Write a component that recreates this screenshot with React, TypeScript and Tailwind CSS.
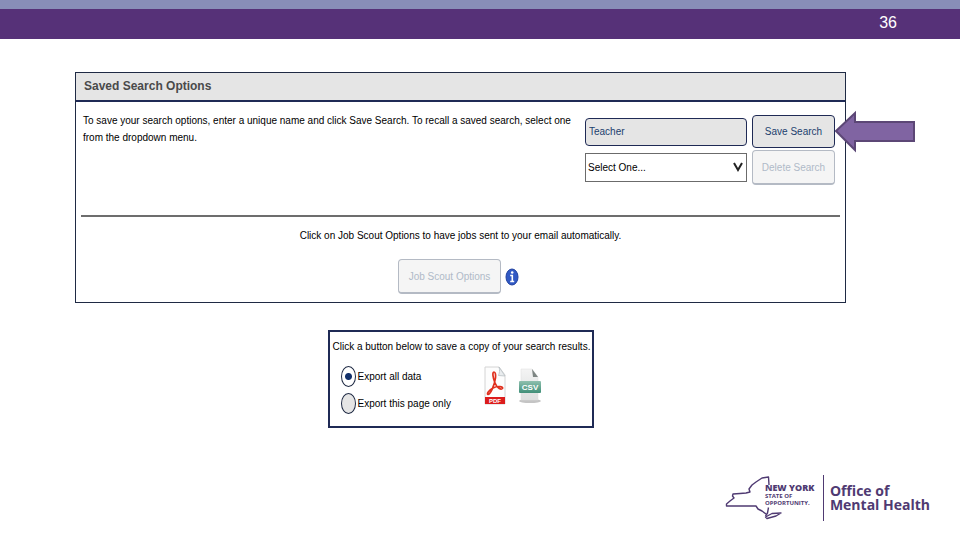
import React, { useState } from 'react';

const PdfIcon = () => (
  <svg viewBox="0 0 22 39" className="h-[39px] w-[22px]" aria-hidden="true">
    <path d="M1 1H15L21 9V38H1Z" fill="#fdfdfd" stroke="#d4d4d4" />
    <path d="M15 1C16 4 15.500 7 14.500 9.500L21 10Z" fill="#e9ecee" stroke="#b9c0c4" strokeWidth=".8" />
    <path
      d="M10 6C8 6 9 12 11 17C13 22 17 24 18.500 22.500C19.500 20.500 14 19.500 9 22C4.500 24.500 2.500 28 4 28.500C6.500 28.500 10.500 19 11.500 12C11.800 9 11.500 6 10 6Z"
      fill="none"
      stroke="#e0301e"
      strokeWidth="1.700"
    />
    <rect x="1" y="31" width="20" height="7" fill="#dc1c1c" />
    <text x="11" y="37" textAnchor="middle" fontSize="6" fontWeight="700" fill="#fff" fontFamily="Liberation Sans, sans-serif">
      PDF
    </text>
  </svg>
);

const CsvIcon = () => (
  <svg viewBox="0 0 24 36" className="h-[36px] w-[24px]" aria-hidden="true">
    <defs>
      <linearGradient id="csvBand" x1="0" y1="0" x2="0" y2="1">
        <stop offset="0" stopColor="#8fc0ae" />
        <stop offset="1" stopColor="#3f8f78" />
      </linearGradient>
      <linearGradient id="csvPage" x1="0" y1="0" x2="0" y2="1">
        <stop offset="0" stopColor="#f4f4f4" />
        <stop offset="1" stopColor="#dcdfdf" />
      </linearGradient>
    </defs>
    <ellipse cx="12" cy="33" rx="11" ry="2" fill="#c4c4c4" />
    <path d="M3 1H14L20 9V32H3Z" fill="url(#csvPage)" stroke="#dcdcdc" strokeWidth=".5" />
    <path d="M14 1L20 9H15Z" fill="#7d8583" />
    <rect x="1" y="13" width="22" height="12" rx="1" fill="url(#csvBand)" />
    <text x="12" y="22" textAnchor="middle" fontSize="8" fontWeight="700" fill="#fff" fontFamily="Liberation Sans, sans-serif">
      CSV
    </text>
  </svg>
);

const InfoIcon = () => (
  <svg viewBox="0 0 14 18" className="h-[18px] w-[14px]" role="img" aria-label="Information">
    <ellipse cx="7" cy="9" rx="6" ry="8" fill="#3159c4" stroke="#2343a0" />
    <path d="M5.200 7.500H7.300V13M5.200 13.500H9.200" fill="none" stroke="#fff" strokeWidth="1.600" />
    <circle cx="7.200" cy="4.500" r="1.300" fill="#fff" />
  </svg>
);

const StateOutline = () => (
  <svg viewBox="0 0 58 46" className="h-[46px] w-[58px]" fill="none" stroke="#4f3a72" strokeWidth="1.400" strokeLinejoin="round" aria-hidden="true">
    <path d="M44 10L43.500 2L37 3L31 7L27 10L24 14L25 17L21 18L15 18.500L8 19L7.500 21L9 23L5 26L1.500 29L1.500 31H31L33 34L37 36L41 39" />
    <path d="M43.500 32.500L42.500 38L40.500 41" />
    <path d="M40.500 42L47 38.500L56 38L51 41L42 43.500Z" />
  </svg>
);

const App: React.FC = () => {
  const [name, setName] = useState('Teacher');
  const [scope, setScope] = useState('all');

  return (
    <div className="min-h-screen bg-white font-['Liberation_Sans',sans-serif] text-[10px] text-black">
      <header className="flex h-[39px] items-center justify-end border-t-[9px] border-[#888eb8] bg-[#563178] pr-[63px] pb-[3px] text-base text-white">
        36
      </header>

      <main className="pt-[33px] pr-[114px] pl-[75px]">
        <section className="border border-[#1f2a44]">
          <h2 className="border-b-2 border-[#1f2a55] bg-[#e5e5e5] px-2 text-xs leading-[27px] font-bold text-[#4a4a4a]">
            Saved Search Options
          </h2>
          <div className="flex items-start justify-between px-[7px] pt-[10px]">
            <p className="w-[494px] leading-[17px]">
              To save your search options, enter a unique name and click Save Search. To recall a saved search, select one from the dropdown menu.
            </p>
            <div className="grid grid-cols-[162px_83px] items-center gap-x-[5px] gap-y-[2px] pt-[3px] pr-[3px]">
              <input
                aria-label="Search name"
                value={name}
                onChange={(e) => setName(e.target.value)}
                className="h-[28px] w-full rounded-[4px] border border-[#1f2a55] bg-[#e5e5e5] px-[3px] text-[#1c3f6e]"
              />
              <div className="relative">
                <button className="h-[33px] w-full rounded-[4px] border border-[#1f2a55] bg-[#e5e5e5] text-[#1c3f6e]">Save Search</button>
                <svg viewBox="0 0 82 44" className="absolute top-[-5px] left-full h-[44px] w-[82px]" aria-hidden="true">
                  <path d="M1 21L20 3V12H79V31H20V40Z" fill="#8064a2" stroke="#5c4776" strokeWidth="2" />
                </svg>
              </div>
              <div className="relative">
                <select aria-label="Saved search" className="h-[29px] w-full appearance-none border border-[#6b6b6b] bg-white px-[2px]">
                  <option>Select One...</option>
                </select>
                <svg viewBox="0 0 12 12" className="pointer-events-none absolute top-[8px] right-[3px] h-[12px] w-[12px]" aria-hidden="true">
                  <path d="M2 2L6 9L10 2" fill="none" stroke="#222" strokeWidth="2" />
                </svg>
              </div>
              <button disabled className="h-[35px] rounded-[4px] border border-b-2 border-[#b4bac4] bg-[#f5f5f5] text-[#b0bac8]">
                Delete Search
              </button>
            </div>
          </div>
          <hr className="mx-[5px] mt-[30px] border-t-2 border-[#6d6d6d]" />
          <p className="mt-[10px] text-center leading-[17px]">Click on Job Scout Options to have jobs sent to your email automatically.</p>
          <div className="mt-[15px] mb-[8px] flex items-center justify-center gap-1 pr-1">
            <button disabled className="h-[35px] w-[103px] rounded-[4px] border border-b-2 border-[#b4bac4] bg-[#f5f5f5] text-[#b0bac8]">
              Job Scout Options
            </button>
            <InfoIcon />
          </div>
        </section>

        <section className="mx-auto mt-[27px] h-[98px] w-[266px] border-2 border-[#1f2a55] px-[3px] pt-[6px]">
          <p className="leading-[17px] whitespace-nowrap">Click a button below to save a copy of your search results.</p>
          <div className="mt-[11px] flex pl-2">
            <div className="flex w-[143px] flex-col gap-[6px]">
              <label className="flex items-center gap-[2px]">
                <input
                  type="radio"
                  name="scope"
                  checked={scope === 'all'}
                  onChange={() => setScope('all')}
                  className="h-[21px] w-[15px] appearance-none rounded-[50%] border border-[#1f2a44] bg-[#e5e5e5] checked:bg-white checked:bg-[radial-gradient(circle,#12306a_3px,transparent_4px)]"
                />
                Export all data
              </label>
              <label className="flex items-center gap-[2px]">
                <input
                  type="radio"
                  name="scope"
                  checked={scope === 'page'}
                  onChange={() => setScope('page')}
                  className="h-[21px] w-[15px] appearance-none rounded-[50%] border border-[#1f2a44] bg-[#e5e5e5] checked:bg-white checked:bg-[radial-gradient(circle,#12306a_3px,transparent_4px)]"
                />
                Export this page only
              </label>
            </div>
            <div className="flex items-center gap-3 self-start">
              <button aria-label="Export as PDF">
                <PdfIcon />
              </button>
              <button aria-label="Export as CSV">
                <CsvIcon />
              </button>
            </div>
          </div>
        </section>
      </main>

      <footer className="mt-[47px] flex justify-end pr-[30px] font-['Open_Sans',sans-serif] font-bold text-[#4f3a72]">
        <StateOutline />
        <div className="-ml-[18px] w-[58px] pt-[8px]">
          <p className="text-[9px] leading-[10px] font-extrabold">NEW YORK</p>
          <p className="text-[6px] leading-[7px]">STATE OF</p>
          <p className="text-[6px] leading-[7px]">OPPORTUNITY.</p>
        </div>
        <div className="border-l border-[#4f3a72] pt-[9px] pl-[6px] text-sm leading-[14px]">
          <p>Office of</p>
          <p>Mental Health</p>
        </div>
      </footer>
    </div>
  );
};

export default App;
